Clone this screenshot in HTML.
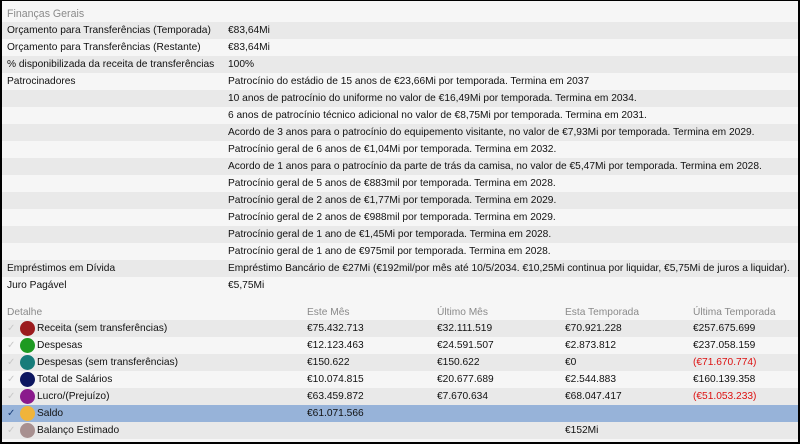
<!DOCTYPE html>
<html><head><meta charset="utf-8"><style>
*{margin:0;padding:0;box-sizing:border-box}
body{width:800px;height:444px;background:#f6f6f6;font-family:"Liberation Sans",sans-serif;font-size:10.2px;color:#111;position:relative;overflow:hidden}
.frame{position:absolute;left:0;top:0;width:800px;height:444px;border:2px solid #000;border-top-width:1px}
.r{position:absolute;left:2px;right:2px;height:17px;line-height:17px;white-space:nowrap}
.s{background:#e9e9e9}
.l{background:#f6f6f6}
.c{position:absolute;top:0}
.h{color:#8a8a8a}
.dot{position:absolute;top:1px;left:18px;width:15px;height:15px;border-radius:50%}
.chk{position:absolute;left:5px;top:0;color:#c8c8c8;font-size:10px}
.red{color:#d11}
</style></head><body>
<div class="r h" style="top:6px;font-size:10.6px"><span class="c" style="left:5px">Finanças Gerais</span></div>
<div class="r s" style="top:22px"><span class="c" style="left:5px">Orçamento para Transferências (Temporada)</span><span class="c" style="left:226px">€83,64Mi</span></div>
<div class="r l" style="top:39px"><span class="c" style="left:5px">Orçamento para Transferências (Restante)</span><span class="c" style="left:226px">€83,64Mi</span></div>
<div class="r s" style="top:56px"><span class="c" style="left:5px">% disponibilizada da receita de transferências</span><span class="c" style="left:226px">100%</span></div>
<div class="r l" style="top:73px"><span class="c" style="left:5px">Patrocinadores</span><span class="c" style="left:226px">Patrocínio do estádio de 15 anos de €23,66Mi por temporada. Termina em 2037</span></div>
<div class="r s" style="top:90px"><span class="c" style="left:226px">10 anos de patrocínio do uniforme no valor de €16,49Mi por temporada. Termina em 2034.</span></div>
<div class="r l" style="top:107px"><span class="c" style="left:226px">6 anos de patrocínio técnico adicional no valor de €8,75Mi por temporada. Termina em 2031.</span></div>
<div class="r s" style="top:124px"><span class="c" style="left:226px">Acordo de 3 anos para o patrocínio do equipemento visitante, no valor de €7,93Mi por temporada. Termina em 2029.</span></div>
<div class="r l" style="top:141px"><span class="c" style="left:226px">Patrocínio geral de 6 anos de €1,04Mi por temporada. Termina em 2032.</span></div>
<div class="r s" style="top:158px"><span class="c" style="left:226px">Acordo de 1 anos para o patrocínio da parte de trás da camisa, no valor de €5,47Mi por temporada. Termina em 2028.</span></div>
<div class="r l" style="top:175px"><span class="c" style="left:226px">Patrocínio geral de 5 anos de €883mil por temporada. Termina em 2028.</span></div>
<div class="r s" style="top:192px"><span class="c" style="left:226px">Patrocínio geral de 2 anos de €1,77Mi por temporada. Termina em 2029.</span></div>
<div class="r l" style="top:209px"><span class="c" style="left:226px">Patrocínio geral de 2 anos de €988mil por temporada. Termina em 2029.</span></div>
<div class="r s" style="top:226px"><span class="c" style="left:226px">Patrocínio geral de 1 ano de €1,45Mi por temporada. Termina em 2028.</span></div>
<div class="r l" style="top:243px"><span class="c" style="left:226px">Patrocínio geral de 1 ano de €975mil por temporada. Termina em 2028.</span></div>
<div class="r s" style="top:260px"><span class="c" style="left:5px">Empréstimos em Dívida</span><span class="c" style="left:226px">Empréstimo Bancário de €27Mi (€192mil/por mês até 10/5/2034. €10,25Mi continua por liquidar, €5,75Mi de juros a liquidar).</span></div>
<div class="r l" style="top:277px"><span class="c" style="left:5px">Juro Pagável</span><span class="c" style="left:226px">€5,75Mi</span></div>

<div class="r h" style="top:304px"><span class="c" style="left:5px">Detalhe</span><span class="c" style="left:305px">Este Mês</span><span class="c" style="left:435px">Último Mês</span><span class="c" style="left:563px">Esta Temporada</span><span class="c" style="left:691px">Última Temporada</span></div>
<div class="r s" style="top:320px"><span class="chk">✓</span><span class="dot" style="background:#9b1b1e"></span><span class="c" style="left:35px">Receita (sem transferências)</span><span class="c" style="left:305px">€75.432.713</span><span class="c" style="left:435px">€32.111.519</span><span class="c" style="left:563px">€70.921.228</span><span class="c" style="left:691px">€257.675.699</span></div>
<div class="r l" style="top:337px"><span class="chk">✓</span><span class="dot" style="background:#1e9a22"></span><span class="c" style="left:35px">Despesas</span><span class="c" style="left:305px">€12.123.463</span><span class="c" style="left:435px">€24.591.507</span><span class="c" style="left:563px">€2.873.812</span><span class="c" style="left:691px">€237.058.159</span></div>
<div class="r s" style="top:354px"><span class="chk">✓</span><span class="dot" style="background:#167c7a"></span><span class="c" style="left:35px">Despesas (sem transferências)</span><span class="c" style="left:305px">€150.622</span><span class="c" style="left:435px">€150.622</span><span class="c" style="left:563px">€0</span><span class="c red" style="left:691px">(€71.670.774)</span></div>
<div class="r l" style="top:371px"><span class="chk">✓</span><span class="dot" style="background:#0c1660"></span><span class="c" style="left:35px">Total de Salários</span><span class="c" style="left:305px">€10.074.815</span><span class="c" style="left:435px">€20.677.689</span><span class="c" style="left:563px">€2.544.883</span><span class="c" style="left:691px">€160.139.358</span></div>
<div class="r s" style="top:388px"><span class="chk">✓</span><span class="dot" style="background:#8a1a8c"></span><span class="c" style="left:35px">Lucro/(Prejuízo)</span><span class="c" style="left:305px">€63.459.872</span><span class="c" style="left:435px">€7.670.634</span><span class="c" style="left:563px">€68.047.417</span><span class="c red" style="left:691px">(€51.053.233)</span></div>
<div class="r" style="top:405px;background:#97b3d9"><span class="chk" style="color:#1a3f7a">✓</span><span class="dot" style="background:#f0b43a"></span><span class="c" style="left:35px">Saldo</span><span class="c" style="left:305px">€61.071.566</span></div>
<div class="r s" style="top:422px"><span class="chk">✓</span><span class="dot" style="background:#a89090"></span><span class="c" style="left:35px">Balanço Estimado</span><span class="c" style="left:563px">€152Mi</span></div>
<div class="frame"></div>
</body></html>
